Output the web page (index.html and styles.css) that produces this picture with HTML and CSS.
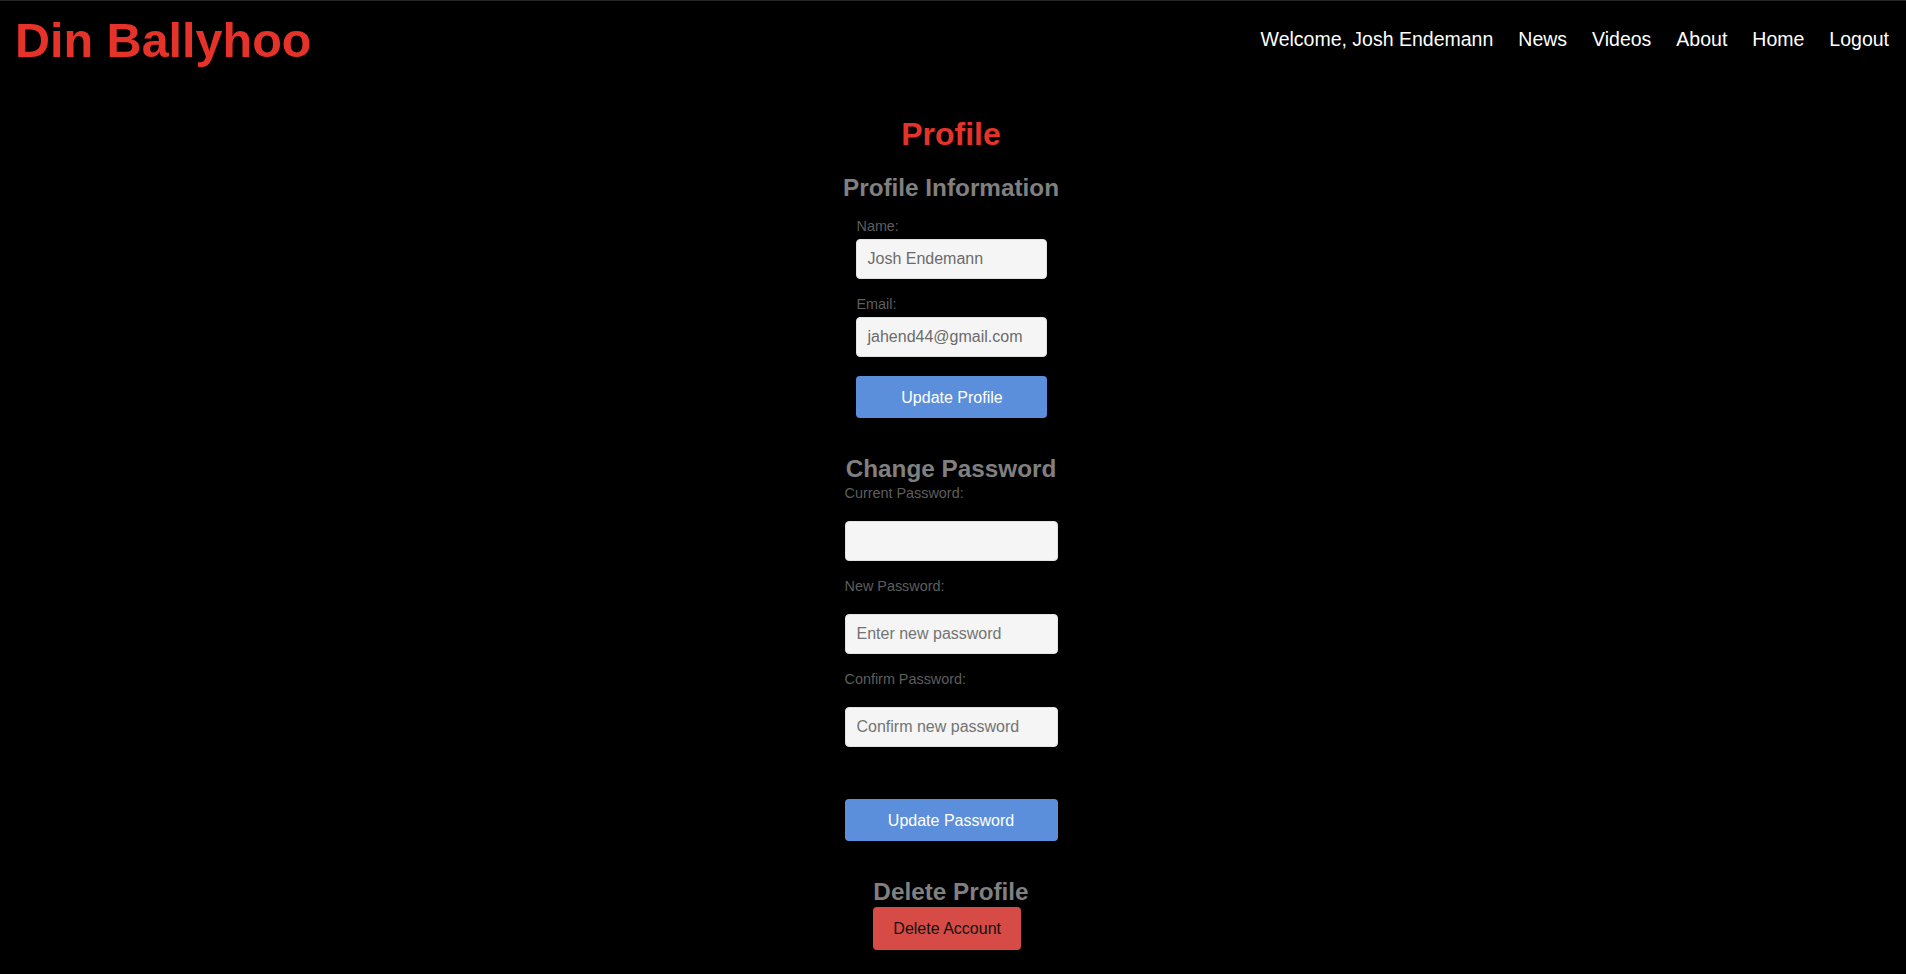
FILE: index.html
```html
<!DOCTYPE html>
<html lang="en">
<head>
<meta charset="utf-8">
<title>Din Ballyhoo - Profile</title>
<link rel="stylesheet" href="styles.css">
</head>
<body>
<header class="site-header">
  <div class="logo">Din Ballyhoo</div>
  <nav class="nav">
    <span class="nav-item">Welcome, Josh Endemann</span>
    <a class="nav-item" href="#">News</a>
    <a class="nav-item" href="#">Videos</a>
    <a class="nav-item" href="#">About</a>
    <a class="nav-item" href="#">Home</a>
    <a class="nav-item" href="#">Logout</a>
  </nav>
</header>
<main class="main">
  <h1 class="page-title">Profile</h1>

  <section class="info-section">
    <h2 class="section-title">Profile Information</h2>
    <form class="info-form">
      <label class="field-label" for="name">Name:</label>
      <input class="field-input info-input" id="name" type="text" value="Josh Endemann">
      <label class="field-label label-gap" for="email">Email:</label>
      <input class="field-input info-input" id="email" type="email" value="jahend44@gmail.com">
      <button class="btn btn-blue btn-profile" type="button">Update Profile</button>
    </form>
  </section>

  <section class="pw-section">
    <h2 class="section-title pw-title">Change Password</h2>
    <label class="field-label" for="cur">Current Password:</label>
    <input class="field-input pw-input" id="cur" type="password">
    <label class="field-label label-gap" for="new">New Password:</label>
    <input class="field-input pw-input" id="new" type="password" placeholder="Enter new password">
    <label class="field-label label-gap" for="conf">Confirm Password:</label>
    <input class="field-input pw-input" id="conf" type="password" placeholder="Confirm new password">
    <button class="btn btn-blue btn-pw" type="button">Update Password</button>
  </section>

  <section class="delete-section">
    <h2 class="section-title del-title">Delete Profile</h2>
    <button class="btn btn-red" type="button">Delete Account</button>
  </section>
</main>
</body>
</html>
```

FILE: styles.css
```css
* {
  box-sizing: border-box;
}

html, body {
  margin: 0;
  padding: 0;
  background: #000;
}

body {
  font-family: "Liberation Sans", Arial, Helvetica, sans-serif;
  color: #fff;
}

.site-header {
  border-top: 1px solid #262626;
  height: 77px;
  display: flex;
  align-items: center;
  justify-content: space-between;
  padding: 0 17px 0 15px;
}

.logo {
  color: #e5332a;
  font-size: 48.5px;
  font-weight: bold;
  line-height: 56px;
  margin-top: 2px;
}

.nav {
  display: flex;
  gap: 25px;
  font-size: 19.5px;
  line-height: 24px;
}

.nav-item {
  color: #fff;
  text-decoration: none;
}

.main {
  display: flex;
  flex-direction: column;
  align-items: center;
  padding: 38px 4px 0 0;
}

.page-title {
  margin: 0;
  color: #e5332a;
  font-size: 32px;
  line-height: 38px;
  font-weight: bold;
}

.section-title {
  margin: 0;
  color: #808080;
  font-size: 24.3px;
  line-height: 28px;
  font-weight: bold;
  text-align: center;
}

.info-section {
  display: flex;
  flex-direction: column;
  align-items: center;
  margin-top: 21px;
}

.info-form {
  width: 191px;
  display: flex;
  flex-direction: column;
  margin-top: 16px;
  margin-left: 2px;
}

.field-label {
  display: block;
  color: #5e5e5e;
  font-size: 14.4px;
  line-height: 17px;
  margin-bottom: 4px;
}

.label-gap {
  margin-top: 17px;
}

.field-input {
  display: block;
  width: 100%;
  height: 40px;
  border: 1px solid #e2e2e2;
  border-radius: 4px;
  background: #f5f5f5;
  color: #6b6b6b;
  font-family: "Liberation Sans", Arial, Helvetica, sans-serif;
  font-size: 16px;
  outline: none;
}

.info-input {
  padding: 0 10px;
}

.pw-input {
  padding: 0 11px;
}

.field-input::placeholder {
  color: #737373;
  opacity: 1;
}

.btn {
  border: none;
  border-radius: 4px;
  font-family: "Liberation Sans", Arial, Helvetica, sans-serif;
  font-size: 16px;
  line-height: 19px;
  cursor: pointer;
}

.btn-blue {
  background: #5b8fdb;
  color: #fff;
  height: 42px;
  width: 100%;
}

.btn-profile {
  margin-top: 19px;
}

.pw-section {
  width: 213px;
  display: flex;
  flex-direction: column;
  margin-top: 37px;
}

.pw-title {
  margin-bottom: 2px;
}

.pw-section .field-label {
  margin-bottom: 19px;
}

.pw-section .label-gap {
  margin-top: 17px;
}

.btn-pw {
  margin-top: 52px;
}

.delete-section {
  display: flex;
  flex-direction: column;
  align-items: flex-start;
  margin-top: 37px;
}

.del-title {
  margin-bottom: 1px;
}

.btn-red {
  background: #d64b45;
  color: #111;
  height: 43px;
  padding: 0 20px;
}
```
